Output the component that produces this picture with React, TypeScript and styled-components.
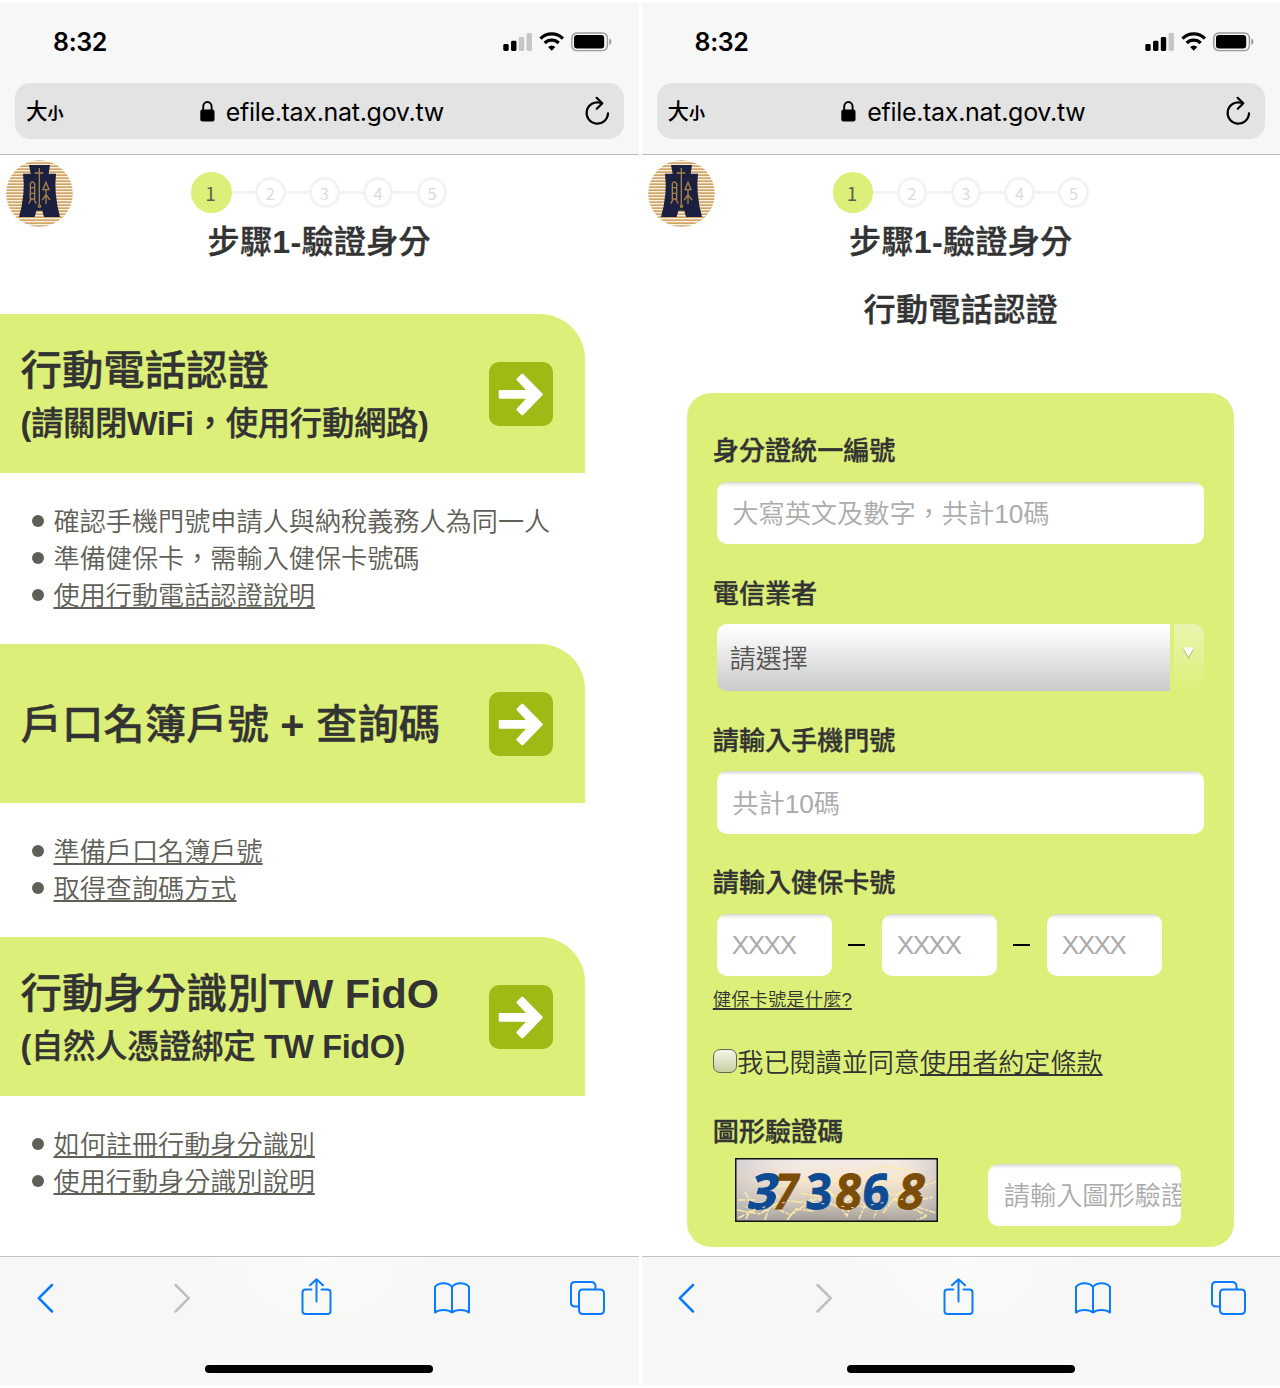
import React from "react";
import styled, { createGlobalStyle } from "styled-components";

const GlobalStyle = createGlobalStyle`
  * { box-sizing: border-box; }
  body {
    margin: 0;
    background: #fff;
    font-family: "Liberation Sans", "Noto Sans CJK TC", sans-serif;
    color: #333;
    -webkit-font-smoothing: antialiased;
  }
`;

const Screens = styled.div`
  display: flex;
  gap: 3px;
  width: 1280px;
  height: 1388px;
  padding-top: 3px;
  overflow: hidden;
`;

const Phone = styled.section`
  width: 638.5px;
  flex: none;
  height: 1382px;
  display: flex;
  flex-direction: column;
  overflow: hidden;
`;

const BrowserTop = styled.header`
  height: 152px;
  flex: none;
  background: #f7f7f7;
  border-bottom: 1px solid #bbb;
`;

const StatusBar = styled.div`
  height: 80px;
  padding: 0 26.5px 2.5px 53px;
  display: flex;
  align-items: center;
  justify-content: space-between;
`;

const Time = styled.span`
  font: 600 25px/30px Inter, sans-serif;
  letter-spacing: -0.35px;
  color: #000;
`;

const AddressBar = styled.div`
  height: 56px;
  margin: 0 15px;
  padding: 0 14px 0 11px;
  border-radius: 15px;
  background: #e3e3e3;
  display: grid;
  grid-template-columns: 60px 1fr 60px;
  align-items: center;
  color: #000;
`;

const TextSize = styled.span`
  font-weight: 500;
  font-size: 21.5px;
  line-height: 30px;
  padding-top: 4px;
  white-space: nowrap;
  small { font-size: 16px; font-weight: 700; }
`;

const Address = styled.span`
  display: flex;
  align-items: center;
  justify-content: center;
  gap: 11px;
  padding: 1px 0 0 8px;
  font: 400 25px/32px Inter, sans-serif;
  letter-spacing: -0.3px;
`;

const Reload = styled.span`
  display: flex;
  justify-content: flex-end;
  padding-top: 2px;
`;

const Page = styled.main`
  flex: 1;
  min-height: 0;
  overflow: hidden;
  background: #fff;
`;

const PageHeader = styled.div`
  display: grid;
  grid-template-columns: 80px 1fr 80px;
  height: 106px;
`;

const LogoBox = styled.div`
  padding: 5px 0 0 6px;
`;

const StepArea = styled.div`
  display: flex;
  flex-direction: column;
  align-items: center;
  padding-top: 17px;
`;

const Steps = styled.div`
  display: flex;
  align-items: center;
  height: 41px;
`;

const StepDot = styled.span<{ $active?: boolean }>`
  width: ${(p) => (p.$active ? 40.5 : 30.5)}px;
  height: ${(p) => (p.$active ? 40.5 : 30.5)}px;
  border-radius: 50%;
  display: flex;
  align-items: center;
  justify-content: center;
  background: ${(p) => (p.$active ? "#dcef78" : "#fff")};
  border: ${(p) => (p.$active ? "none" : "3px solid #f3f3f3")};
  padding-right: ${(p) => (p.$active ? 2 : 0)}px;
  color: ${(p) => (p.$active ? "#5f5f58" : "#dcdcd6")};
  font: 400 ${(p) => (p.$active ? 19 : 16.5)}px/20px "Noto Sans CJK TC", sans-serif;
`;

const StepLine = styled.span`
  width: 23.4px;
  height: 3px;
  background: #f3f3f3;
`;

const semibold = `
  font-weight: 500;
  -webkit-text-stroke: 0.35px #333;
  b { font-weight: 700; -webkit-text-stroke: 0; }
`;

const Heading = styled.h1<{ $top?: number }>`
  margin: ${(p) => p.$top ?? 0}px 0 0;
  font-size: 32.2px;
  line-height: 48px;
  letter-spacing: 0.2px;
  text-align: center;
  white-space: nowrap;
  ${semibold}
`;

const Methods = styled.div`
  padding-top: 53px;
`;

const MethodCard = styled.div`
  width: 585.3px;
  height: 159.4px;
  padding: 0 32px 0 20.5px;
  border-radius: 0 45px 0 0;
  background: #dcef78;
  display: flex;
  align-items: center;
  justify-content: space-between;
`;

const MethodText = styled.div`
  padding-top: 5px;
`;

const MethodTitle = styled.h2`
  margin: 0;
  font-size: 41.4px;
  line-height: 55.5px;
  white-space: nowrap;
  ${semibold}
`;

const MethodNote = styled.p`
  margin: 0;
  font-size: 32.4px;
  line-height: 48.5px;
  letter-spacing: -0.35px;
  white-space: nowrap;
  ${semibold}
`;

const ArrowBox = styled.span`
  width: 64px;
  height: 64px;
  border-radius: 10px;
  background: #a0b914;
  display: flex;
`;

const Notes = styled.ul`
  list-style: none;
  margin: 0;
  padding: 31px 0 28.6px 31.5px;
`;

const Note = styled.li`
  display: flex;
  align-items: center;
  gap: 10px;
  height: 37px;
  font-size: 26.15px;
  line-height: 37px;
  font-weight: 350;
  color: #5f5f58;
  white-space: nowrap;
  &::before {
    content: "";
    width: 12px;
    height: 12px;
    margin-bottom: 3px;
    border-radius: 50%;
    background: #5f5f58;
  }
`;

const Link = styled.a`
  text-decoration: underline;
  text-decoration-thickness: 1.5px;
  text-underline-offset: 2px;
  text-decoration-skip-ink: none;
`;

const FormCard = styled.form`
  width: 547.5px;
  height: 854px;
  margin: 59px 0 0 45.3px;
  padding: 38px 26px 0;
  border-radius: 24px;
  background: #dcef78;
`;

const Field = styled.div`
  margin-bottom: 29.5px;
`;

const Label = styled.label`
  display: block;
  height: 40px;
  line-height: 40px;
  margin-bottom: 10.5px;
  font-size: 26.1px;
  white-space: nowrap;
  ${semibold}
`;

const Input = styled.input<{ $width: number; $tight?: boolean }>`
  display: block;
  width: ${(p) => p.$width}px;
  height: 62.5px;
  padding: ${(p) => (p.$tight ? "2px" : "4px")} 0 0 ${(p) => (p.$tight ? 15 : 15.5)}px;
  border: 0;
  border-radius: 10px;
  background: linear-gradient(#d2d2d2 0, #ececec 2px, #fff 5px);
  font: 350 26.2px "Liberation Sans", "Noto Sans CJK TC", sans-serif;
  letter-spacing: ${(p) => (p.$tight ? "-1.6px" : "0")};
  color: #333;
  outline: none;
  &::placeholder { color: #ababab; opacity: 1; }
`;

const Inset = styled.div`
  margin-left: 4px;
`;

const Select = styled(Inset)`
  display: flex;
  gap: 4px;
  height: 67px;
`;

const SelectValue = styled.div`
  width: 453px;
  padding: 2px 0 0 13px;
  border-radius: 10px 0 0 10px;
  background: linear-gradient(#fff 5%, #cacaca);
  font-size: 26px;
  line-height: 67px;
  font-weight: 350;
  color: #555;
`;

const SelectArrow = styled.div`
  width: 30px;
  padding: 23px 0 0 8px;
  border-radius: 0 10px 10px 0;
  background: linear-gradient(#ebf4af, #dcef78);
`;

const CardNumbers = styled(Inset)`
  display: flex;
  align-items: center;
`;

const Dash = styled.span`
  width: 17px;
  height: 2px;
  margin: 0 16.6px 0 16.4px;
  background: #000;
`;

const HelpLink = styled(Link)`
  display: block;
  width: max-content;
  height: 28px;
  margin-top: -19.5px;
  font-size: 18.4px;
  line-height: 28px;
  font-weight: 350;
`;

const Agreement = styled.div`
  display: flex;
  align-items: center;
  height: 40px;
  margin: 27px 0 31px;
  font-size: 26.1px;
  font-weight: 350;
  white-space: nowrap;
`;

const Checkbox = styled.span`
  width: 24.5px;
  height: 24.5px;
  border: 1.5px solid #666655;
  border-radius: 7px;
  background: linear-gradient(#f5f7e6, #c9cfa4);
`;

const CaptchaRow = styled.div`
  display: flex;
  align-items: flex-start;
  margin: -4.5px 0 0 22.5px;
  gap: 50px;
`;

const CaptchaInput = styled.div`
  padding-top: 5.5px;
`;

const CaptchaImage = styled.svg`
  display: block;
  overflow: visible;
`;

const Toolbar = styled.footer`
  height: 129px;
  flex: none;
  border-top: 1px solid #c2c2be;
  background: radial-gradient(ellipse 130px 90px at 320px 10px, #fafaf7, #f7f7f7);
`;

const ToolbarIcons = styled.div`
  height: 82px;
  padding: 0 31px 0 24.5px;
  display: flex;
  align-items: center;
  justify-content: space-between;
`;

const HomeIndicator = styled.div`
  width: 228px;
  height: 8px;
  margin: 25.5px auto 0;
  border-radius: 4px;
  background: #000;
`;

const StatusIcons = ({ bars }: { bars: number }) => (
  <svg width="109" height="20" viewBox="0 0 109 20">
    {[7, 10.2, 14, 18].map((h, i) => (
      <rect key={i} x={0.3 + i * 7.75} y={19 - h} width="5.4" height={h} rx="1.4" fill={i < bars ? "#000" : "#c6c6c6"} />
    ))}
    <g fill="none" stroke="#000" strokeWidth="3.3">
      <path d="M37.5 6.6a15.8 15.8 0 0 1 22.4 0" />
      <path d="M41.7 11a9.8 9.8 0 0 1 14 0" />
    </g>
    <path d="M45.1 15a5 5 0 0 1 7.2 0l-3.6 3.8z" />
    <rect x="68.8" y="1" width="35.6" height="17.6" rx="5" fill="none" stroke="#999" strokeWidth="1.4" />
    <rect x="71" y="3.1" width="30.2" height="13.4" rx="3" />
    <path d="M106.3 6.6c2.8 1 2.8 5.4 0 6.4z" fill="#999" />
  </svg>
);

const LockIcon = () => (
  <svg width="15" height="21" viewBox="0 0 15 21">
    <rect x="0.3" y="8.500" width="14.2" height="12" rx="2" />
    <path d="M3.2 10V5.8a4.2 4.8 0 0 1 8.4 0V10" fill="none" stroke="#000" strokeWidth="1.9" />
  </svg>
);

const ReloadIcon = () => (
  <svg width="26" height="32" viewBox="0 0 26 32" fill="none" stroke="#000" strokeWidth="2.2" strokeLinecap="round" strokeLinejoin="round">
    <path d="M16.5 6.8A10.7 10.7 0 1 0 24 17.3" />
    <path d="M12.6 1.8L18.3 7.3L12.8 12.8" />
  </svg>
);

const Logo = () => (
  <svg width="67" height="67" viewBox="18 480 201 201">
    <defs>
      <pattern id="goldLines" width="20" height="9" patternUnits="userSpaceOnUse">
        <rect width="20" height="9" fill="#f8f0e0" />
        <rect width="20" height="5" y="1" fill="#d0a566" />
      </pattern>
    </defs>
    <circle cx="118.5" cy="580.5" r="100" fill="url(#goldLines)" />
    <path d="M87 495H150L146 521H168Q161 580 180 651H132L127 632H109L104 651H57Q77 580 69 521H92Z" fill="#1b2040" />
    <g fill="none" stroke="#a88349" strokeWidth="4">
      <path d="M118 504V614M104 519H130" />
      <circle cx="118.5" cy="619" r="3.5" />
      <path d="M91 597V551Q97 541 104 551V597ZM91 563H104M91 580H104M94 597L86 611M101 597L109 611" />
      <path d="M138 547L129 569H147ZM138 569V612M138 584L127 600M138 584L150 600" />
    </g>
  </svg>
);

const ArrowIcon = () => (
  <svg width="64" height="64" viewBox="0 0 64 64">
    <path
      d="M11 29.3H40L28.8 17.3L33.3 12.8L52.5 32.3L33.3 52L28.800 47.500L40 35.500H11Z"
      fill="#fff"
      stroke="#fff"
      strokeWidth="2.6"
      strokeLinejoin="round"
    />
  </svg>
);

const scribbles = [
  "M3 60L20 52L12 49L45 39L30 31L58 26L84 17L110 23L148 8L182 14",
  "M2 52L25 56L48 42L72 45L88 29L110 44L137 24L157 37L201 24",
  "M10 34L18 47L11 61M3 42H20M30 62L35 47L55 57L82 40L104 49L120 34",
  "M95 34L112 58L118 38L130 47L124 61M88 20L104 29L125 17L151 21",
  "M148 55L163 35L181 43L198 39M160 40L192 58L182 62M158 41L201 55",
  "M52 62L61 51L78 53L94 42M66 35L86 39L98 32M113 46L142 51L139 60",
];

const captchaDigits = [
  { char: "3", x: 11, skew: -14, scale: 1.02, color: "#0e4b94" },
  { char: "7", x: 36, skew: -12, scale: 0.82, color: "#7b4d08" },
  { char: "3", x: 70, skew: -3, scale: 0.94, color: "#0e4b94" },
  { char: "8", x: 99, skew: -6, scale: 0.94, color: "#7b4d08" },
  { char: "6", x: 127, skew: -3, scale: 0.95, color: "#0e4b94" },
  { char: "8", x: 160, skew: -12, scale: 0.94, color: "#7b4d08" },
];

const Captcha = () => (
  <CaptchaImage width="203" height="64" viewBox="0 0 203 64">
    <defs>
      <linearGradient id="captchaSky" x1="0" y1="0" x2="0" y2="1">
        <stop offset="0" stopColor="#f0e9f0" />
        <stop offset="0.35" stopColor="#f6e4cf" />
        <stop offset="0.7" stopColor="#c8bfb8" />
        <stop offset="1" stopColor="#8d8a8b" />
      </linearGradient>
      <linearGradient id="captchaSide">
        <stop offset="0" stopColor="#b9b7c2" stopOpacity=".5" />
        <stop offset="0.35" stopColor="#fff0d0" stopOpacity=".15" />
        <stop offset="0.8" stopColor="#fff0d0" stopOpacity=".25" />
        <stop offset="1" stopColor="#b8b4b2" stopOpacity=".5" />
      </linearGradient>
    </defs>
    <rect x="1" y="1" width="201" height="62" fill="url(#captchaSky)" />
    <rect x="1" y="1" width="201" height="62" fill="url(#captchaSide)" />
    <g fill="none" stroke="#f9eaa8" strokeWidth="1.5" strokeDasharray="7 1.5 3 1">
      {scribbles.map((d) => <path key={d} d={d} />)}
    </g>
    <g fontFamily="Open Sans, sans-serif" fontWeight="700" fontSize="49" strokeWidth="1">
      {captchaDigits.map((g) => (
        <text key={g.x} transform={`translate(${g.x} 51) skewX(${g.skew}) scale(${g.scale} 1)`} fill={g.color} stroke={g.color}>
          {g.char}
        </text>
      ))}
    </g>
    <g fill="none" stroke="#f3dfaa" strokeWidth="1" strokeDasharray="3 7">
      <path d="M8 54L60 42L120 50L195 36" />
    </g>
    <rect x="0.75" y="0.75" width="201.5" height="62.5" fill="none" stroke="#111" strokeWidth="1.5" />
  </CaptchaImage>
);

const TriangleIcon = () => (
  <svg width="14" height="14" viewBox="0 0 14 14">
    <path d="M1 1.8H12L6.5 11.800Z" fill="#a8b36a" />
    <path d="M1 0.5H12L6.5 10Z" fill="#fff" />
  </svg>
);

const toolbarPaths = [
  "M27 7L13.800 20.200L27 33.500",
  "M15.500 7L28.700 20.200L15.500 33.500",
  "M15.500 11.500H9.500Q6.500 11.500 6.500 14.500V33Q6.500 36 9.500 36H31.500Q34.500 36 34.500 33V14.500Q34.500 11.500 31.500 11.500H25.500M20.500 23.500V1.500M14 7.300L20.500 1.200L27 7.300",
  "M20 8.8V34.5M20 8.8C16 4 7 4 3 8.8V34.5C7 31 16 31 20 34.5C24 31 33 31 37 34.5V8.8C33 4 24 4 20 8.8Z",
  "M10.5 28.5H7Q3 28.5 3 24.5V8Q3 4 7 4H23Q27.5 4 27.5 8.5V11.5M14.5 11.5H32Q36 11.5 36 15.5V32Q36 36 32 36H15Q11 36 11 32V15.5Q11 11.5 14.5 11.5Z",
];

const ToolIcon = ({ index }: { index: number }) => (
  <svg width="40" height="40" viewBox="0 0 40 40" fill="none" stroke={index === 1 ? "#bfbfbf" : "#0a7bff"} strokeWidth={index < 2 ? 2.5 : 2} strokeLinecap="round" strokeLinejoin="round">
    <path d={toolbarPaths[index]} />
  </svg>
);

const PhoneFrame = ({ bars, children }: { bars: number; children: React.ReactNode }) => (
  <Phone>
    <BrowserTop>
      <StatusBar>
        <Time>8:32</Time>
        <StatusIcons bars={bars} />
      </StatusBar>
      <AddressBar>
        <TextSize>大<small>小</small></TextSize>
        <Address><LockIcon />efile.tax.nat.gov.tw</Address>
        <Reload><ReloadIcon /></Reload>
      </AddressBar>
    </BrowserTop>
    <Page>
      <PageHeader>
        <LogoBox><Logo /></LogoBox>
        <StepArea>
          <Steps>
            <StepDot $active>1</StepDot>
            {[2, 3, 4, 5].map((n) => (
              <React.Fragment key={n}>
                <StepLine />
                <StepDot>{n}</StepDot>
              </React.Fragment>
            ))}
          </Steps>
          <Heading $top={5}>步驟<b>1-</b>驗證身分</Heading>
        </StepArea>
      </PageHeader>
      {children}
    </Page>
    <Toolbar>
      <ToolbarIcons>
        {toolbarPaths.map((_, i) => <ToolIcon key={i} index={i} />)}
      </ToolbarIcons>
      <HomeIndicator />
    </Toolbar>
  </Phone>
);

const methods: {
  title: React.ReactNode;
  note?: React.ReactNode;
  items: { text: string; link?: boolean }[];
}[] = [
  {
    title: "行動電話認證",
    note: <><b>(</b>請關閉<b>WiFi</b>，使用行動網路<b>)</b></>,
    items: [
      { text: "確認手機門號申請人與納稅義務人為同一人" },
      { text: "準備健保卡，需輸入健保卡號碼" },
      { text: "使用行動電話認證說明", link: true },
    ],
  },
  {
    title: <>戶口名簿戶號 <b>+</b> 查詢碼</>,
    items: [
      { text: "準備戶口名簿戶號", link: true },
      { text: "取得查詢碼方式", link: true },
    ],
  },
  {
    title: <>行動身分識別<b>TW FidO</b></>,
    note: <><b>(</b>自然人憑證綁定<b> TW FidO)</b></>,
    items: [
      { text: "如何註冊行動身分識別", link: true },
      { text: "使用行動身分識別說明", link: true },
    ],
  },
];

export default function App() {
  return (
    <>
      <GlobalStyle />
      <Screens lang="zh-Hant-TW">
        <PhoneFrame bars={2}>
          <Methods>
            {methods.map((m, i) => (
              <React.Fragment key={i}>
                <MethodCard>
                  <MethodText>
                    <MethodTitle>{m.title}</MethodTitle>
                    {m.note && <MethodNote>{m.note}</MethodNote>}
                  </MethodText>
                  <ArrowBox><ArrowIcon /></ArrowBox>
                </MethodCard>
                <Notes>
                  {m.items.map((it) => (
                    <Note key={it.text}>{it.link ? <Link>{it.text}</Link> : it.text}</Note>
                  ))}
                </Notes>
              </React.Fragment>
            ))}
          </Methods>
        </PhoneFrame>
        <PhoneFrame bars={3}>
          <Heading as="h2" $top={25}>行動電話認證</Heading>
          <FormCard>
            <Field>
              <Label>身分證統一編號</Label>
              <Inset><Input $width={487} placeholder="大寫英文及數字，共計10碼" /></Inset>
            </Field>
            <Field>
              <Label>電信業者</Label>
              <Select>
                <SelectValue>請選擇</SelectValue>
                <SelectArrow><TriangleIcon /></SelectArrow>
              </Select>
            </Field>
            <Field>
              <Label>請輸入手機門號</Label>
              <Inset><Input $width={487} placeholder="共計10碼" /></Inset>
            </Field>
            <Field>
              <Label>請輸入健保卡號</Label>
              <CardNumbers>
                <Input $width={115} $tight placeholder="XXXX" />
                <Dash />
                <Input $width={115} $tight placeholder="XXXX" />
                <Dash />
                <Input $width={115} $tight placeholder="XXXX" />
              </CardNumbers>
            </Field>
            <HelpLink>健保卡號是什麼?</HelpLink>
            <Agreement>
              <Checkbox />
              <span>我已閱讀並同意<Link>使用者約定條款</Link></span>
            </Agreement>
            <Label>圖形驗證碼</Label>
            <CaptchaRow>
              <Captcha />
              <CaptchaInput><Input $width={193} placeholder="請輸入圖形驗證碼" /></CaptchaInput>
            </CaptchaRow>
          </FormCard>
        </PhoneFrame>
      </Screens>
    </>
  );
}
